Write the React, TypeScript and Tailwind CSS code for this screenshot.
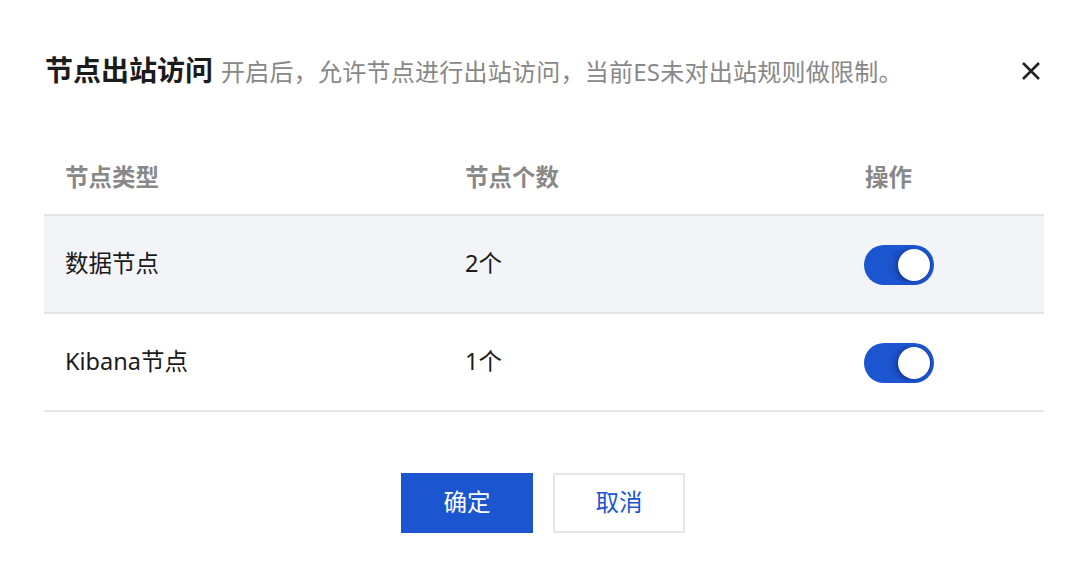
import React from "react";

const font = { fontFamily: '"Noto Sans", "Noto Sans CJK SC", sans-serif' };

function Toggle() {
  return (
    <div className="relative mt-[2px] h-[40px] w-[70px] rounded-full bg-[#1c55d0]">
      <div className="absolute right-[3px] top-[4px] h-[32px] w-[44px] rounded-full bg-gradient-to-r from-[#1c55d0] to-[#1a3fa8]" />
      <div className="absolute right-[4px] top-[4px] h-[32px] w-[32px] rounded-full bg-white shadow-[-2px_1px_4px_rgba(0,20,80,0.35)]" />
    </div>
  );
}

const rows = [
  { type: "数据节点", count: "2个", bg: "bg-[#f3f4f7]" },
  { type: "Kibana节点", count: "1个", bg: "bg-white" },
];

export default function App() {
  return (
    <div className="h-[570px] w-[1086px] bg-white" style={font}>
      <div className="flex h-[142px] items-start justify-between pl-[45px] pr-[44px] pt-[50px]">
        <div className="flex items-baseline">
          <span className="text-[28px] font-bold leading-[40px] text-[#1b1b1b]">节点出站访问</span>
          <span className="ml-[8px] text-[24px] leading-[40px] tracking-[0.25px] text-[#888888]">
            开启后，允许节点进行出站访问，当前ES未对出站规则做限制。
          </span>
        </div>
        <svg width="22" height="22" viewBox="0 0 22 22" className="mt-[10px]">
          <path d="M3 3 L19 19 M19 3 L3 19" stroke="#222" strokeWidth="2.6" strokeLinecap="butt" />
        </svg>
      </div>
      <div className="ml-[44px] mr-[42px]">
        <div className="grid h-[74px] grid-cols-[400px_400px_200px] items-center border-b-2 border-[#e5e5ea] text-[23.5px] font-bold text-[#888888]">
          <div className="pl-[21px]">节点类型</div>
          <div className="pl-[21px]">节点个数</div>
          <div className="pl-[21px]">操作</div>
        </div>
        {rows.map((r) => (
          <div
            key={r.type}
            className={`grid h-[98px] grid-cols-[400px_400px_200px] items-center border-b-2 border-[#e5e5ea] text-[23.5px] text-[#1b1b1b] ${r.bg}`}
          >
            <div className="pl-[21px]">{r.type}</div>
            <div className="pl-[21px]">{r.count}</div>
            <div className="pl-[20px]">
              <Toggle />
            </div>
          </div>
        ))}
      </div>
      <div className="mt-[61px] flex justify-center gap-[20px]">
        <button className="h-[60px] w-[132px] bg-[#1c55d0] text-[23.5px] text-white">确定</button>
        <button className="h-[60px] w-[132px] border-2 border-[#e5e5ec] bg-white text-[23.5px] text-[#1c55d0]">
          取消
        </button>
      </div>
    </div>
  );
}
